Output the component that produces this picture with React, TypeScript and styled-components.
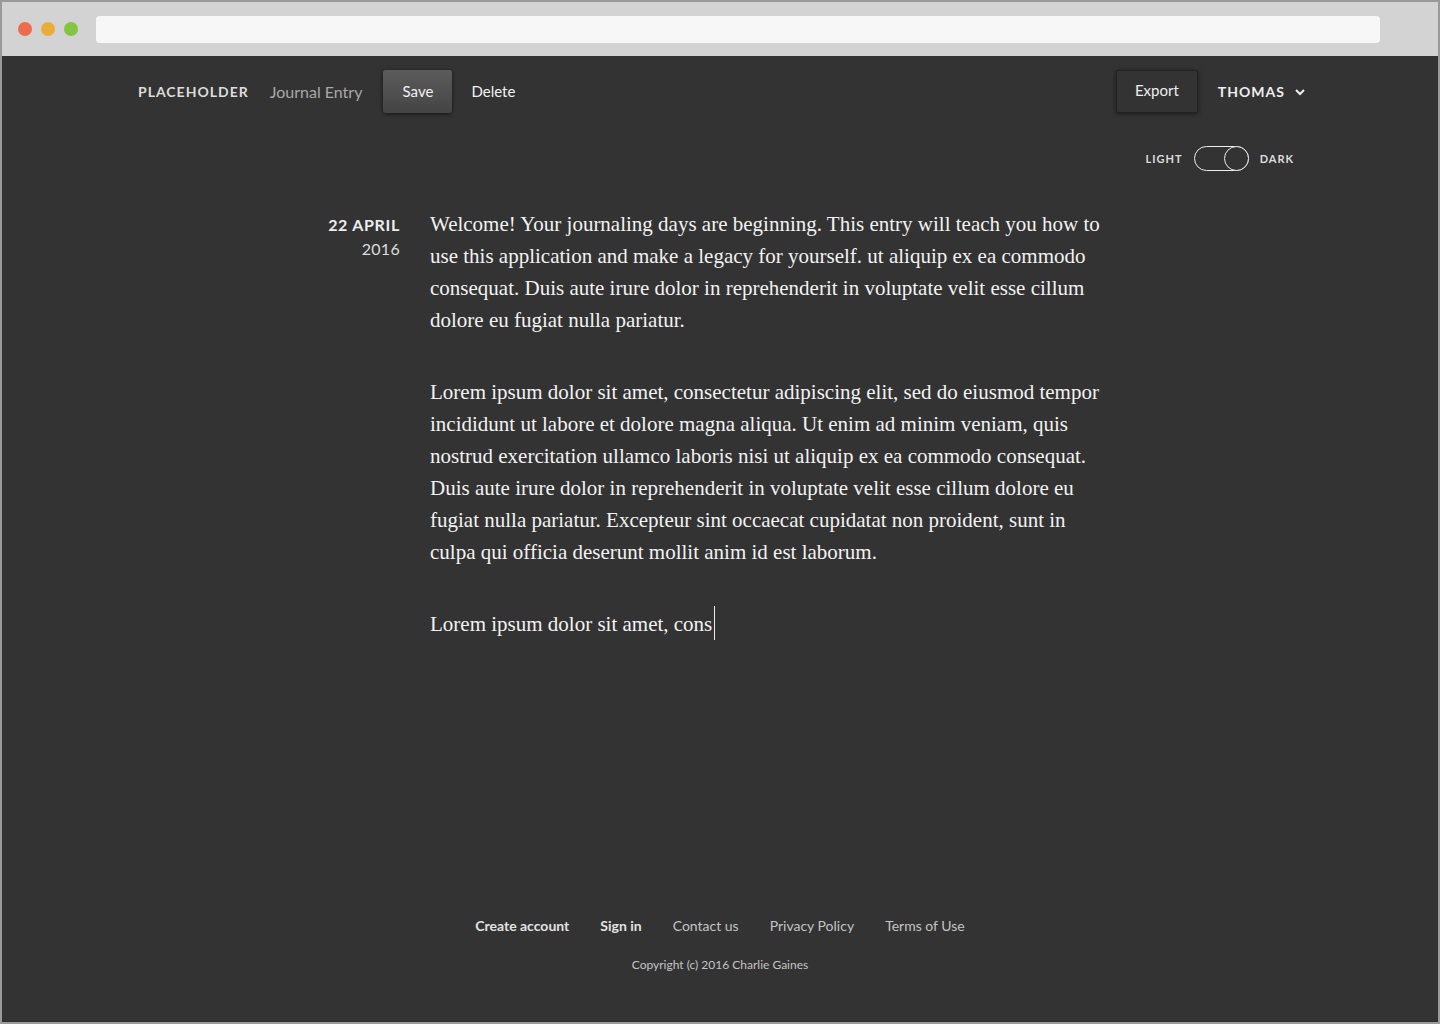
import React from "react";
import styled, { createGlobalStyle } from "styled-components";

const Global = createGlobalStyle`
  html, body { margin: 0; padding: 0; background: #999; }
  * { box-sizing: border-box; }
`;

const Frame = styled.div`
  width: 1440px;
  height: 1024px;
  border: 2px solid #9a9a9a;
  display: flex;
  flex-direction: column;
  background: #333;
  font-family: Lato, "Open Sans", sans-serif;
`;

const Chrome = styled.div`
  height: 54px;
  background: #d3d3d3;
  display: flex;
  align-items: center;
  padding: 0 58px 0 16px;
`;

const Dots = styled.div`
  display: flex;
  gap: 9px;
  margin-right: 18px;
`;

const Dot = styled.span<{ $c: string }>`
  width: 14px;
  height: 14px;
  border-radius: 50%;
  background: ${(p) => p.$c};
`;

const Address = styled.div`
  flex: 1;
  height: 27px;
  background: #f7f7f7;
  border-radius: 4px;
`;

const Page = styled.div`
  flex: 1;
  display: flex;
  flex-direction: column;
  background: #333;
  color: #eee;
`;

const Header = styled.header`
  width: 1168px;
  margin: 0 auto;
  padding-top: 14px;
`;

const NavRow = styled.div`
  display: flex;
  align-items: center;
  height: 43px;
`;

const Brand = styled.div`
  font-weight: 700;
  font-size: 14px;
  letter-spacing: 1px;
  color: #ddd;
  text-transform: uppercase;
  margin-left: 2px;
  margin-right: 21px;
`;

const Crumb = styled.div`
  font-size: 16px;
  color: #a8a8a8;
  margin-right: 21px;
`;

const SaveButton = styled.button`
  height: 43px;
  width: 69px;
  border: none;
  border-radius: 3px;
  background: linear-gradient(#5c5c5c, #444);
  box-shadow: 0 1px 4px rgba(0, 0, 0, 0.6);
  color: #f2f2f2;
  font-family: inherit;
  font-size: 15px;
  padding-bottom: 2px;
  margin-right: 19px;
`;

const TextButton = styled.button`
  background: none;
  border: none;
  color: #f2f2f2;
  font-family: inherit;
  font-size: 15px;
  padding: 0 0 2px;
`;

const Spacer = styled.div`
  flex: 1;
`;

const ExportButton = styled.button`
  height: 43px;
  width: 82px;
  flex-shrink: 0;
  border: 1px solid #222;
  border-radius: 2px;
  background: #333;
  box-shadow: 0 1px 4px rgba(0, 0, 0, 0.5);
  color: #eee;
  font-family: inherit;
  font-size: 15px;
  padding-bottom: 4px;
  margin-right: 20px;
`;

const User = styled.div`
  display: flex;
  align-items: center;
  gap: 9px;
  font-weight: 700;
  font-size: 14px;
  letter-spacing: 1px;
  color: #eee;
  margin-right: -2px;
`;

const ThemeRow = styled.div`
  display: flex;
  justify-content: flex-end;
  align-items: center;
  gap: 11px;
  margin-top: 33px;
  padding-right: 10px;
`;

const ThemeLabel = styled.span`
  font-size: 11px;
  font-weight: 700;
  letter-spacing: 1px;
  color: #ddd;
`;

const Toggle = styled.div`
  position: relative;
  width: 55px;
  height: 25px;
  border: 1px solid #eee;
  border-radius: 13px;
`;

const Knob = styled.span`
  position: absolute;
  right: -1px;
  top: -1px;
  width: 25px;
  height: 25px;
  border: 1px solid #eee;
  border-radius: 50%;
  background: #333;
`;

const Main = styled.main`
  flex: 1;
  display: grid;
  grid-template-columns: 398px 672px;
  column-gap: 30px;
  padding-top: 37px;
`;

const DateCol = styled.div`
  text-align: right;
  padding-top: 4px;
`;

const Day = styled.div`
  font-weight: 700;
  font-size: 16px;
  letter-spacing: 0.7px;
  line-height: 25px;
  color: #eee;
`;

const Year = styled.div`
  font-size: 16px;
  line-height: 24px;
  letter-spacing: 0.3px;
  color: #ddd;
`;

const Body = styled.div`
  font-family: "Liberation Serif", "DejaVu Serif", serif;
  font-size: 21px;
  line-height: 32px;
  color: #f2f2f2;
`;

const Para = styled.p`
  margin: 0 0 40px;
`;

const Caret = styled.span`
  display: inline-block;
  width: 1px;
  height: 34px;
  background: #eee;
  margin: -4px 0 -4px 2px;
  vertical-align: -5px;
`;

const Footer = styled.footer`
  display: flex;
  flex-direction: column;
  align-items: center;
  padding-bottom: 50px;
`;

const Links = styled.nav`
  display: flex;
  gap: 31px;
  font-size: 14px;
`;

const FootLink = styled.a<{ $strong?: boolean }>`
  color: ${(p) => (p.$strong ? "#e2e2e2" : "#c4c4c4")};
  font-weight: ${(p) => (p.$strong ? 700 : 400)};
  text-decoration: none;
`;

const Copy = styled.div`
  margin-top: 23px;
  font-size: 12px;
  color: #c4c4c4;
`;

export default function App() {
  return (
    <>
      <Global />
      <Frame>
        <Chrome>
          <Dots>
            <Dot $c="#ec6c4e" />
            <Dot $c="#e9ad39" />
            <Dot $c="#84c441" />
          </Dots>
          <Address />
        </Chrome>
        <Page>
          <Header>
            <NavRow>
              <Brand>Placeholder</Brand>
              <Crumb>Journal Entry</Crumb>
              <SaveButton>Save</SaveButton>
              <TextButton>Delete</TextButton>
              <Spacer />
              <ExportButton>Export</ExportButton>
              <User>
                THOMAS
                <svg width="12" height="12" viewBox="0 0 12 12" fill="none">
                  <path d="M2 4l4 4 4-4" stroke="#eee" strokeWidth="2" />
                </svg>
              </User>
            </NavRow>
            <ThemeRow>
              <ThemeLabel>LIGHT</ThemeLabel>
              <Toggle>
                <Knob />
              </Toggle>
              <ThemeLabel>DARK</ThemeLabel>
            </ThemeRow>
          </Header>
          <Main>
            <DateCol>
              <Day>22 APRIL</Day>
              <Year>2016</Year>
            </DateCol>
            <Body>
              <Para>
                Welcome! Your journaling days are beginning. This entry will teach you how to use this
                application and make a legacy for yourself. ut aliquip ex ea commodo consequat. Duis
                aute irure dolor in reprehenderit in voluptate velit esse cillum dolore eu fugiat nulla
                pariatur.
              </Para>
              <Para>
                Lorem ipsum dolor sit amet, consectetur adipiscing elit, sed do eiusmod tempor
                incididunt ut labore et dolore magna aliqua. Ut enim ad minim veniam, quis nostrud
                exercitation ullamco laboris nisi ut aliquip ex ea commodo consequat. Duis aute irure
                dolor in reprehenderit in voluptate velit esse cillum dolore eu fugiat nulla pariatur.
                Excepteur sint occaecat cupidatat non proident, sunt in culpa qui officia deserunt
                mollit anim id est laborum.
              </Para>
              <Para>
                Lorem ipsum dolor sit amet, cons
                <Caret />
              </Para>
            </Body>
          </Main>
          <Footer>
            <Links>
              <FootLink $strong>Create account</FootLink>
              <FootLink $strong>Sign in</FootLink>
              <FootLink>Contact us</FootLink>
              <FootLink>Privacy Policy</FootLink>
              <FootLink>Terms of Use</FootLink>
            </Links>
            <Copy>Copyright (c) 2016 Charlie Gaines</Copy>
          </Footer>
        </Page>
      </Frame>
    </>
  );
}
